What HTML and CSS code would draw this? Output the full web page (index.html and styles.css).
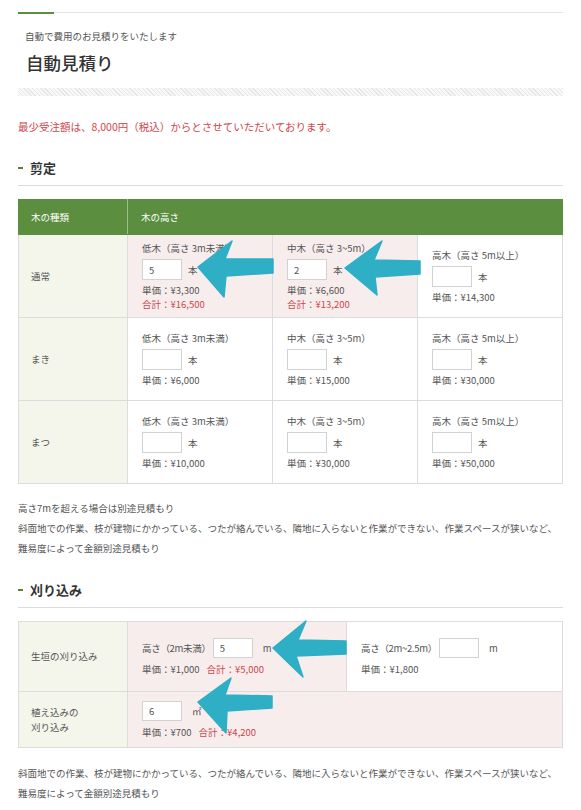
FILE: index.html
```html
<!DOCTYPE html>
<html lang="ja">
<head>
<meta charset="utf-8">
<title>自動見積り</title>
<link rel="stylesheet" href="styles.css">
</head>
<body>
<div class="page">
  <div class="topline"></div>
  <p class="subtitle">自動で費用のお見積りをいたします</p>
  <h1 class="title">自動見積り</h1>
  <div class="stripe"></div>
  <p class="notice">最少受注額は、8,000円（税込）からとさせていただいております。</p>

  <h2 class="sec">剪定</h2>
  <table class="est est1">
    <colgroup><col class="c1"><col><col><col></colgroup>
    <thead>
      <tr><th class="h1">木の種類</th><th class="h2" colspan="3">木の高さ</th></tr>
    </thead>
    <tbody>
      <tr>
        <td class="kind">通常</td>
        <td class="cell on">
          <div class="lbl">低木（高さ 3m未満）</div>
          <div class="qty"><input class="num" type="text" value="5"><span>本</span></div>
          <div class="price">単価：¥3,300</div>
          <div class="total">合計：¥16,500</div>
        </td>
        <td class="cell on">
          <div class="lbl">中木（高さ 3~5m）</div>
          <div class="qty"><input class="num" type="text" value="2"><span>本</span></div>
          <div class="price">単価：¥6,600</div>
          <div class="total">合計：¥13,200</div>
        </td>
        <td class="cell">
          <div class="lbl">高木（高さ 5m以上）</div>
          <div class="qty"><input class="num" type="text" value=""><span>本</span></div>
          <div class="price">単価：¥14,300</div>
        </td>
      </tr>
      <tr>
        <td class="kind">まき</td>
        <td class="cell">
          <div class="lbl">低木（高さ 3m未満）</div>
          <div class="qty"><input class="num" type="text" value=""><span>本</span></div>
          <div class="price">単価：¥6,000</div>
        </td>
        <td class="cell">
          <div class="lbl">中木（高さ 3~5m）</div>
          <div class="qty"><input class="num" type="text" value=""><span>本</span></div>
          <div class="price">単価：¥15,000</div>
        </td>
        <td class="cell">
          <div class="lbl">高木（高さ 5m以上）</div>
          <div class="qty"><input class="num" type="text" value=""><span>本</span></div>
          <div class="price">単価：¥30,000</div>
        </td>
      </tr>
      <tr>
        <td class="kind">まつ</td>
        <td class="cell">
          <div class="lbl">低木（高さ 3m未満）</div>
          <div class="qty"><input class="num" type="text" value=""><span>本</span></div>
          <div class="price">単価：¥10,000</div>
        </td>
        <td class="cell">
          <div class="lbl">中木（高さ 3~5m）</div>
          <div class="qty"><input class="num" type="text" value=""><span>本</span></div>
          <div class="price">単価：¥30,000</div>
        </td>
        <td class="cell">
          <div class="lbl">高木（高さ 5m以上）</div>
          <div class="qty"><input class="num" type="text" value=""><span>本</span></div>
          <div class="price">単価：¥50,000</div>
        </td>
      </tr>
    </tbody>
  </table>

  <div class="notes">
    <p>高さ7mを超える場合は別途見積もり</p>
    <p>斜面地での作業、枝が建物にかかっている、つたが絡んでいる、隣地に入らないと作業ができない、作業スペースが狭いなど、</p>
    <p>難易度によって金額別途見積もり</p>
  </div>

  <h2 class="sec sec2">刈り込み</h2>
  <table class="est est2">
    <colgroup><col class="c1"><col class="c2"><col></colgroup>
    <tbody>
      <tr class="r1">
        <td class="kind">生垣の刈り込み</td>
        <td class="cell2 on">
          <div class="line"><span class="plab">高さ（2m未満）</span><input class="num" type="text" value="5"><span class="unit">m</span></div>
          <div class="pline"><span>単価：¥1,000</span><span class="red">合計：¥5,000</span></div>
        </td>
        <td class="cell2">
          <div class="line"><span class="plab">高さ（2m~2.5m）</span><input class="num" type="text" value=""><span class="unit">m</span></div>
          <div class="pline"><span>単価：¥1,800</span></div>
        </td>
      </tr>
      <tr class="r2">
        <td class="kind kind2">植え込みの<br>刈り込み</td>
        <td class="cell2 on" colspan="2">
          <div class="line"><input class="num first" type="text" value="6"><span class="unit">㎡</span></div>
          <div class="pline"><span>単価：¥700</span><span class="red">合計：¥4,200</span></div>
        </td>
      </tr>
    </tbody>
  </table>

  <div class="notes notes2">
    <p>斜面地での作業、枝が建物にかかっている、つたが絡んでいる、隣地に入らないと作業ができない、作業スペースが狭いなど、</p>
    <p>難易度によって金額別途見積もり</p>
  </div>
</div>

<svg class="arrows" width="581" height="810" viewBox="0 0 581 810" aria-hidden="true">
  <polygon points="198,267 232,241 225,259 273,259 273,273 226,276 224,297"/>
  <polygon points="345,268 382,241 374,260 420,261 420,274 375,277 377,295"/>
  <polygon points="273,648 306,621 298,640 346,641 346,654 296,656 303,677"/>
  <polygon points="198,702 231,678 225,695 272,696 272,708 227,711 226,733"/>
</svg>
</body>
</html>
```

FILE: styles.css
```css
* { box-sizing: border-box; }
html, body { margin: 0; padding: 0; background: #fff; }
body {
  position: relative;
  width: 581px;
  min-height: 810px;
  font-family: "Noto Sans CJK JP", "Noto Sans", sans-serif;
  font-size: 9.5px;
  color: #555;
}
p, h1, h2 { margin: 0; }

.page { padding: 12px 18px 0 18px; }

.topline {
  height: 2px;
  background:
    linear-gradient(#5b8e3e, #5b8e3e) 0 0 / 36px 2px no-repeat,
    linear-gradient(#e2e2e2, #e2e2e2) 0 0 / 100% 1px no-repeat;
}

.subtitle {
  margin-top: 15px;
  padding-left: 7px;
  line-height: 14px;
  font-size: 9.5px;
  color: #555;
}
.title {
  margin-top: 7px;
  padding-left: 8px;
  font-size: 17.5px;
  line-height: 26px;
  font-weight: 500;
  color: #333;
}
.stripe {
  margin-top: 12px;
  height: 8px;
  background: repeating-linear-gradient(45deg, #e6e6e6 0 1px, #f8f8f8 1px 3px);
}
.notice {
  margin-top: 23px;
  font-size: 10.5px;
  line-height: 16px;
  color: #d0454c;
}

.sec {
  margin-top: 24px;
  font-size: 13px;
  line-height: 18px;
  font-weight: 700;
  color: #333;
  padding-bottom: 8px;
  border-bottom: 1px solid #dcdcdc;
  display: flex;
  align-items: center;
}
.sec::before {
  content: "";
  width: 5px;
  height: 2px;
  background: #5f7a3a;
  margin-right: 7px;
}
.sec2 { margin-top: 23px; }

.est {
  width: 100%;
  margin-top: 13px;
  border-collapse: collapse;
  table-layout: fixed;
}
.est col.c1 { width: 109px; }
.est2 col.c2 { width: 219px; }
.est th, .est td {
  border: 1px solid #dcdcdc;
  padding: 0;
  text-align: left;
  font-weight: 400;
}
.est thead th {
  height: 35px;
  background: #5b8e3e;
  color: #fff;
  border-color: #5b8e3e;
  font-size: 9.5px;
}
.est thead th.h1 { padding-left: 12px; border-right: 1px solid #9cbf88; }
.est thead th.h2 { padding-left: 13px; }

.kind {
  background: #f4f6ec;
  padding-left: 12px !important;
  vertical-align: middle;
  line-height: 15px;
}
.est1 tbody tr { height: 83px; }
.cell {
  padding: 0 14px !important;
  vertical-align: middle;
  background: #fff;
}
.on { background: #f8eded !important; }

.lbl, .price, .total { line-height: 14px; white-space: nowrap; }
.qty {
  display: flex;
  align-items: center;
  gap: 6px;
  margin-top: 4px;
}
.num {
  width: 40px;
  height: 21px;
  margin: 0;
  padding: 0 6px;
  border: 1px solid #d2d2d2;
  background: #fff;
  font-family: inherit;
  font-size: 9.5px;
  color: #555;
  outline: none;
}
.price { margin-top: 3px; }
.total { color: #d0454c; }

.est2 tr.r1 { height: 70px; }
.est2 tr.r2 { height: 56px; }
.cell2 {
  padding: 0 14px !important;
  vertical-align: middle;
  background: #fff;
}
.line {
  display: flex;
  align-items: center;
  white-space: nowrap;
}
.plab { letter-spacing: -0.3px; }
.line .num { margin-left: 2px; height: 20px; }
.line .num.first { margin-left: 0; }
.line .unit { margin-left: 10px; }
.pline {
  margin-top: 4px;
  line-height: 14px;
  display: flex;
  gap: 7px;
  white-space: nowrap;
}
.red { color: #d0454c; }

.notes { margin-top: 14px; }
.notes p { line-height: 20px; white-space: nowrap; }
.notes2 { margin-top: 15px; }

.arrows {
  position: absolute;
  left: 0;
  top: 0;
  pointer-events: none;
}
.arrows polygon {
  fill: #2eafc6;
  stroke: #2eafc6;
  stroke-width: 1.5;
  stroke-linejoin: round;
}
```
